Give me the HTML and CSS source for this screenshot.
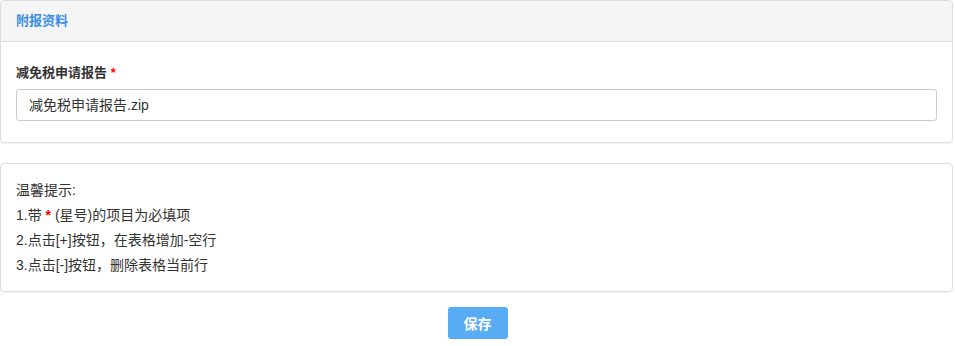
FILE: index.html
```html
<!DOCTYPE html>
<html lang="zh-CN">
<head>
  <meta charset="UTF-8" />
  <title>附报资料</title>
  <link rel="stylesheet" href="styles.css">
</head>
<body>
  <div class="panel">
    <div class="panel-heading">附报资料</div>
    <div class="panel-body">
      <div class="campo">
        <label class="etiqueta">减免税申请报告 <span class="req">*</span></label>
        <div class="archivo">减免税申请报告.zip</div>
      </div>
    </div>
  </div>

  <div class="panel tips">
    <div class="panel-body">
      <p>温馨提示:</p>
      <p>1.带 <span class="req">*</span> (星号)的项目为必填项</p>
      <p>2.点击[+]按钮，在表格增加-空行</p>
      <p>3.点击[-]按钮，删除表格当前行</p>
    </div>
  </div>

  <div class="acciones">
    <button class="btn-guardar">保存</button>
  </div>
</body>
</html>
```

FILE: styles.css
```css
body {
  margin: 0;
  width: 953px;
  font-family: "Liberation Sans", "Noto Sans CJK SC", sans-serif;
  font-size: 14px;
  color: #333;
  background: #fff;
}
.panel {
  border: 1px solid #ddd;
  border-radius: 4px;
  box-shadow: 0 1px 1px rgba(0,0,0,0.05);
  background: #fff;
}
.panel-heading {
  height: 40px;
  line-height: 40px;
  padding: 0 15px;
  background-color: #f5f5f5;
  border-bottom: 1px solid #ddd;
  border-radius: 4px 4px 0 0;
  color: #3a8ee6;
  font-size: 13px;
  font-weight: bold;
}
.panel-body {
  padding: 22px 15px 21px;
}
.etiqueta {
  display: block;
  font-size: 13px;
  font-weight: bold;
  line-height: 18px;
  margin-bottom: 7px;
}
.req {
  color: #f00;
  font-weight: bold;
}
.archivo {
  height: 30px;
  line-height: 30px;
  border: 1px solid #ccc;
  border-radius: 3px;
  padding: 0 12px;
  font-size: 14px;
}
.tips {
  margin-top: 20px;
}
.tips .panel-body {
  padding: 14px 15px 13px;
}
.tips p {
  margin: 0;
  line-height: 25px;
}
.acciones {
  display: flex;
  justify-content: center;
  margin-top: 15px;
  padding-left: 2px;
}
.btn-guardar {
  width: 60px;
  height: 32px;
  border: none;
  border-radius: 3px;
  background-color: #57acf3;
  color: #fff;
  font-family: inherit;
  font-size: 14px;
  font-weight: bold;
  cursor: pointer;
}
```
